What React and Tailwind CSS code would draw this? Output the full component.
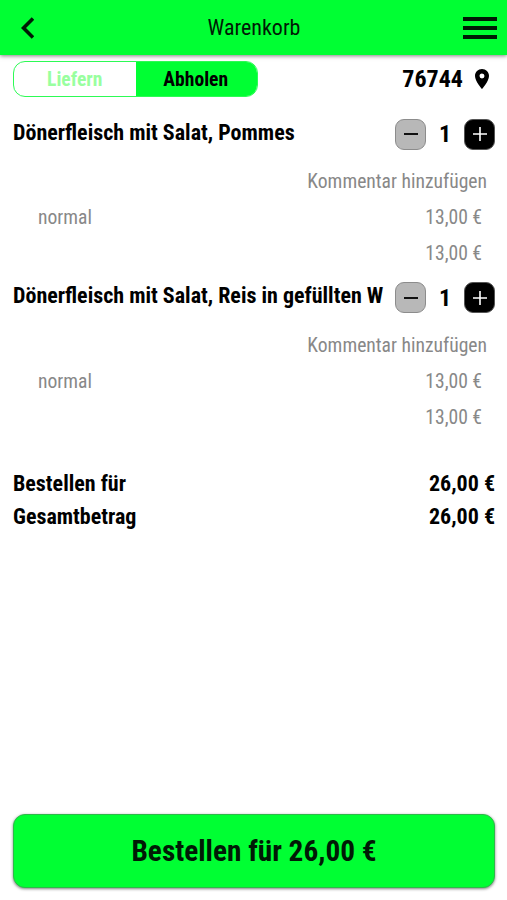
import React from 'react';

const items = [
  { id: 1, name: 'Dönerfleisch mit Salat, Pommes', variant: 'normal', price: '13,00 €', count: 1 },
  { id: 2, name: 'Dönerfleisch mit Salat, Reis in gefüllten W', variant: 'normal', price: '13,00 €', count: 1 }
];

const Header = () => (
  <header className="relative z-10 flex h-[55px] shrink-0 items-center justify-between bg-[#00ff33] pl-[21px] pr-[10px] shadow-[0_1px_4px_rgba(0,0,0,0.5)]">
    <button className="w-[24px]" aria-label="Zurück">
      <svg className="h-[22px] w-[13px]" viewBox="0 0 13 22" fill="none" stroke="#001a05" strokeWidth="3.6">
        <path d="M12 1.5 2.5 11 12 20.5" />
      </svg>
    </button>
    <h1 className="text-[22px] leading-none text-[#001a05]">Warenkorb</h1>
    <button className="flex w-[34px] flex-col gap-[5px]" aria-label="Menü">
      <span className="h-1 w-full bg-[#001a05]" />
      <span className="h-1 w-full bg-[#001a05]" />
      <span className="h-1 w-full bg-[#001a05]" />
    </button>
  </header>
);

const DeliveryBar = () => (
  <div className="flex h-9 shrink-0 items-center justify-between">
    <div className="flex h-9 w-[245px] overflow-hidden rounded-xl border border-[#2dfb55] text-[19.6px] font-bold">
      <button className="w-1/2 pt-px text-[#99ff9f]">Liefern</button>
      <button className="w-1/2 bg-[#00ff33] pr-px pt-px text-black">Abholen</button>
    </div>
    <div className="flex items-center gap-3 pr-[6px] text-[24px] font-bold">
      <span>76744</span>
      <svg className="h-5 w-[14px]" viewBox="5 2 14 20" fill="currentColor">
        <path d="M12 2C8.13 2 5 5.13 5 9c0 5.25 7 13 7 13s7-7.75 7-13c0-3.87-3.13-7-7-7zm0 9.5a2.5 2.5 0 0 1 0-5 2.5 2.5 0 0 1 0 5z" />
      </svg>
    </div>
  </div>
);

const Counter = ({ count }) => (
  <div className="flex shrink-0 items-center">
    <button className="flex size-[31px] items-center justify-center rounded-[9px] border border-[#8c8c8c] bg-[#b8b8b8]" aria-label="Weniger">
      <span className="h-[2px] w-[14px] bg-[#111]" />
    </button>
    <span className="w-[38px] text-center text-[24px] font-bold">{count}</span>
    <button className="flex size-[31px] items-center justify-center rounded-[9px] border border-[#555] bg-black" aria-label="Mehr">
      <svg className="size-[14px]" viewBox="0 0 14 14" stroke="#fff" strokeWidth="1.6">
        <path d="M7 0v14M0 7h14" />
      </svg>
    </button>
  </div>
);

const CartItem = ({ item }) => (
  <section className="h-[163.6px]">
    <div className="flex h-[31px] items-center justify-between">
      <h2 className="-mt-[3px] whitespace-nowrap text-[22px] font-bold">{item.name}</h2>
      <Counter count={item.count} />
    </div>
    <div className="mt-[14.4px] text-[19.6px] text-[#888]">
      <div className="flex h-9 items-center justify-end pr-2">Kommentar hinzufügen</div>
      <div className="flex h-9 items-center justify-between pl-[25px] pr-[13px]">
        <span>{item.variant}</span>
        <span>{item.price}</span>
      </div>
      <div className="flex h-9 items-center justify-end pr-[13px]">{item.price}</div>
    </div>
  </section>
);

const TotalRow = ({ label, value }) => (
  <div className="flex h-[33px] items-center justify-between text-[22px] font-bold">
    <span>{label}</span>
    <span>{value}</span>
  </div>
);

export default function App() {
  return (
    <div className="flex h-[900px] w-[507px] flex-col overflow-hidden bg-white font-['Roboto_Condensed',Roboto,sans-serif] leading-none text-black [font-stretch:75%]">
      <Header />
      <main className="flex flex-1 flex-col pb-3 pl-[13px] pr-3 pt-[6px]">
        <DeliveryBar />
        <div className="mt-[21.6px]">
          {items.map((item) => (
            <CartItem key={item.id} item={item} />
          ))}
        </div>
        <div className="mt-[22px]">
          <TotalRow label="Bestellen für" value="26,00 €" />
          <TotalRow label="Gesamtbetrag" value="26,00 €" />
        </div>
        <button className="mt-auto h-[74px] rounded-xl border border-[#2fb84a] bg-[#00ff33] pt-px text-[29.3px] font-bold text-[#001a05] shadow-[0_1px_3px_rgba(0,0,0,0.5)]">
          Bestellen für 26,00 €
        </button>
      </main>
    </div>
  );
}
